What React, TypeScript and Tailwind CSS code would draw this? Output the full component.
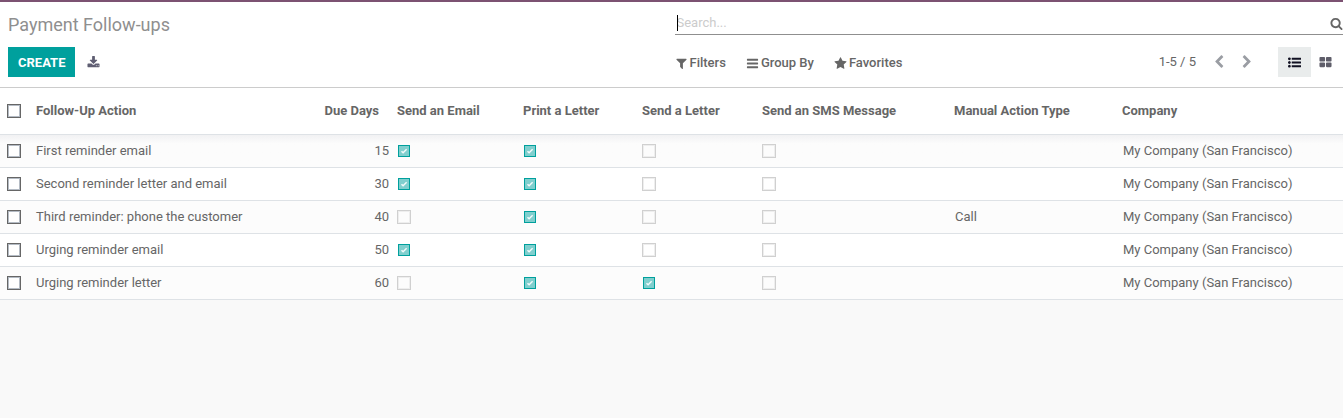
import { useState } from "react";
import type { ReactNode } from "react";
import clsx from "clsx";

interface FollowUp {
  id: number;
  name: string;
  dueDays: number;
  email: boolean;
  print: boolean;
  letter: boolean;
  sms: boolean;
  manualType: string;
  company: string;
}

const company = "My Company (San Francisco)";

const followUps: FollowUp[] = [
  { id: 1, name: "First reminder email", dueDays: 15, email: true, print: true, letter: false, sms: false, manualType: "", company },
  { id: 2, name: "Second reminder letter and email", dueDays: 30, email: true, print: true, letter: false, sms: false, manualType: "", company },
  { id: 3, name: "Third reminder: phone the customer", dueDays: 40, email: false, print: true, letter: false, sms: false, manualType: "Call", company },
  { id: 4, name: "Urging reminder email", dueDays: 50, email: true, print: true, letter: false, sms: false, manualType: "", company },
  { id: 5, name: "Urging reminder letter", dueDays: 60, email: false, print: true, letter: true, sms: false, manualType: "", company },
];

const flagColumns = [
  { key: "email", label: "Send an Email" },
  { key: "print", label: "Print a Letter" },
  { key: "letter", label: "Send a Letter" },
  { key: "sms", label: "Send an SMS Message" },
] as const;

const icons = {
  download:
    "M1344 1344q0-26-19-45t-45-19-45 19-19 45 19 45 45 19 45-19 19-45zm256 0q0-26-19-45t-45-19-45 19-19 45 19 45 45 19 45-19 19-45zm128-224v320q0 40-28 68t-68 28h-1472q-40 0-68-28t-28-68v-320q0-40 28-68t68-28h465l135 136q58 56 136 56t136-56l136-136h464q40 0 68 28t28 68zm-325-569q17 41-14 70l-448 448q-18 19-45 19t-45-19l-448-448q-31-29-14-70 17-39 59-39h256v-448q0-26 19-45t45-19h256q26 0 45 19t19 45v448h256q42 0 59 39z",
  filter:
    "M1595 295q17 41-14 70l-493 493v742q0 42-39 59-13 5-25 5-27 0-45-19l-256-256q-19-19-19-45v-486l-493-493q-31-29-14-70 17-39 59-39h1280q42 0 59 39z",
  bars:
    "M1664 1344v128q0 26-19 45t-45 19h-1408q-26 0-45-19t-19-45v-128q0-26 19-45t45-19h1408q26 0 45 19t19 45zm0-512v128q0 26-19 45t-45 19h-1408q-26 0-45-19t-19-45v-128q0-26 19-45t45-19h1408q26 0 45 19t19 45zm0-512v128q0 26-19 45t-45 19h-1408q-26 0-45-19t-19-45v-128q0-26 19-45t45-19h1408q26 0 45 19t19 45z",
  star:
    "M1728 647q0 22-26 48l-363 354 86 500q1 7 1 20 0 21-10.5 35.5t-30.5 14.5q-19 0-40-12l-449-236-449 236q-22 12-40 12-21 0-31.5-14.5t-10.5-35.5q0-6 2-20l86-500-364-354q-25-27-25-48 0-37 56-46l502-73 225-455q19-41 49-41t49 41l225 455 502 73q56 9 56 46z",
  search:
    "M1216 832q0-185-131.5-316.5t-316.5-131.5-316.5 131.5-131.5 316.5 131.5 316.5 316.5 131.5 316.5-131.5 131.5-316.5zm512 832q0 52-38 90t-90 38q-54 0-90-38l-343-342q-179 124-399 124-143 0-273.5-55.5t-225-150-150-225-55.5-273.5 55.5-273.5 150-225 225-150 273.5-55.5 273.5 55.5 225 150 150 225 55.5 273.5q0 220-124 399l343 343q37 37 37 90z",
  chevronLeft:
    "M1427 301l-531 531 531 531q19 19 19 45t-19 45l-166 166q-19 19-45 19t-45-19l-742-742q-19-19-19-45t19-45l742-742q19-19 45-19t45 19l166 166q19 19 19 45t-19 45z",
  chevronRight:
    "M1363 877l-742 742q-19 19-45 19t-45-19l-166-166q-19-19-19-45t19-45l531-531-531-531q-19-19-19-45t19-45l166-166q19-19 45-19t45 19l742 742q19 19 19 45t-19 45z",
  list:
    "M384 1408q0 80-56 136t-136 56-136-56-56-136 56-136 136-56 136 56 56 136zm0-512q0 80-56 136t-136 56-136-56-56-136 56-136 136-56 136 56 56 136zm1408 416v192q0 13-9.500 22.500t-22.500 9.500h-1216q-13 0-22.500-9.500t-9.500-22.500v-192q0-13 9.500-22.500t22.500-9.500h1216q13 0 22.500 9.500t9.500 22.500zm-1408-928q0 80-56 136t-136 56-136-56-56-136 56-136 136-56 136 56 56 136zm1408 416v192q0 13-9.500 22.500t-22.500 9.500h-1216q-13 0-22.500-9.500t-9.500-22.500v-192q0-13 9.500-22.500t22.500-9.500h1216q13 0 22.500 9.500t9.500 22.500zm0-512v192q0 13-9.500 22.500t-22.500 9.500h-1216q-13 0-22.500-9.500t-9.500-22.500v-192q0-13 9.500-22.500t22.500-9.500h1216q13 0 22.500 9.500t9.500 22.500z",
  kanban:
    "M832 1024v384q0 52-38 90t-90 38h-512q-52 0-90-38t-38-90v-384q0-52 38-90t90-38h512q52 0 90 38t38 90zm0-768v384q0 52-38 90t-90 38h-512q-52 0-90-38t-38-90v-384q0-52 38-90t90-38h512q52 0 90 38t38 90zm896 768v384q0 52-38 90t-90 38h-512q-52 0-90-38t-38-90v-384q0-52 38-90t90-38h512q52 0 90 38t38 90zm0-768v384q0 52-38 90t-90 38h-512q-52 0-90-38t-38-90v-384q0-52 38-90t90-38h512q52 0 90 38t38 90z",
};

function Icon({ name, className = "size-[13px]" }: { name: keyof typeof icons; className?: string }) {
  return (
    <svg viewBox="0 0 1792 1792" fill="currentColor" aria-hidden="true" className={clsx("shrink-0", className)}>
      <path d={icons[name]} />
    </svg>
  );
}

function RowCheckbox({ label }: { label: string }) {
  return (
    <input
      type="checkbox"
      aria-label={label}
      className="block size-3.5 appearance-none border border-[#666666] bg-white shadow-[inset_0_0_0_1px_#b4bbc4] checked:bg-[#00a09d]"
    />
  );
}

function FlagCheckbox({ checked, label }: { checked: boolean; label: string }) {
  return (
    <span className="relative flex size-3.5 items-center justify-center">
      <input
        type="checkbox"
        aria-label={label}
        checked={checked}
        disabled
        className={clsx(
          "block appearance-none border",
          checked ? "size-3 border-[#00a09d] bg-[#80cfce]" : "size-3.5 border-[#d0d0d0] shadow-[inset_0_0_0_1px_#eeeeee]"
        )}
      />
      {checked && (
        <svg viewBox="0 0 12 12" fill="none" aria-hidden="true" className="pointer-events-none absolute size-3">
          <path d="M3.500 6.200l1.600 1.600 3.500-3.500" stroke="#f2fafa" strokeWidth="1.500" />
        </svg>
      )}
    </span>
  );
}

function HeaderCell({ children, className }: { children: ReactNode; className?: string }) {
  return <th className={clsx("truncate px-1 text-left font-bold", className)}>{children}</th>;
}

function ControlPanel() {
  const [query, setQuery] = useState("");

  return (
    <header className="grid grid-cols-2 border-b border-[#cccccc] bg-white">
      <h1 className="flex h-11 items-center pt-0.5 pl-2 text-lg text-[#8f8f8f]">Payment Follow-ups</h1>

      {/* Search */}
      <div className="pl-[3px]">
        <label className="relative flex h-[33px] items-center border-b border-[#8f8f8f] pt-2.5">
          {query === "" && <span className="absolute left-0.5 h-4 w-px bg-black" />}
          <input
            type="text"
            aria-label="Search"
            placeholder="Search..."
            value={query}
            onChange={(e) => setQuery(e.target.value)}
            className="min-w-0 grow pl-0.5 outline-none placeholder:text-[#cccccc]"
          />
          <Icon name="search" />
        </label>
      </div>

      {/* Actions */}
      <div className="flex h-[41px] items-start gap-3 pt-px pl-2">
        <button type="button" className="h-[30px] bg-[#00a09d] px-2.5 pt-0.5 font-bold text-white uppercase">
          Create
        </button>
        <button type="button" aria-label="Export all" className="flex h-[30px] items-center text-[#5f5e72]">
          <Icon name="download" />
        </button>
      </div>

      {/* Filters, pager and view switcher */}
      <div className="flex h-[41px] items-start justify-between pt-px pl-[3px]">
        <div className="flex h-8 items-center gap-5 font-medium">
          <button type="button" className="flex items-center gap-0.5">
            <Icon name="filter" />
            Filters
          </button>
          <button type="button" className="flex items-center gap-0.5">
            <Icon name="bars" />
            Group By
          </button>
          <button type="button" className="flex items-center gap-0.5">
            <Icon name="star" />
            Favorites
          </button>
        </div>
        <div className="flex h-[30px] items-center">
          <span>1-5 / 5</span>
          <div className="flex gap-3.5 px-4 text-[#9a9da3]">
            <button type="button" aria-label="Previous">
              <Icon name="chevronLeft" className="size-3.5" />
            </button>
            <button type="button" aria-label="Next">
              <Icon name="chevronRight" className="size-3.5" />
            </button>
          </div>
          <div className="flex pl-2">
            <button type="button" aria-label="List view" className="flex h-[30px] w-[33px] items-center justify-center bg-[#e9ecec] text-[#111122]">
              <Icon name="list" />
            </button>
            <button type="button" aria-label="Kanban view" className="flex h-[30px] w-8 items-center pl-2 text-[#5f5e6a]">
              <Icon name="kanban" />
            </button>
          </div>
        </div>
      </div>
    </header>
  );
}

export default function App() {
  return (
    <div className="min-h-screen border-t-2 border-[#7c5272] bg-[#f9f9f9] font-[Roboto,sans-serif] text-[13px] leading-5 text-[#666666]">
      <ControlPanel />

      <table className="w-full table-fixed border-collapse">
        <colgroup>
          <col className="w-8" />
          <col />
          <col className="w-[80px]" />
          <col className="w-[126px]" />
          <col className="w-[119px]" />
          <col className="w-[120px]" />
          <col className="w-[192px]" />
          <col className="w-[168px]" />
          <col className="w-[225px]" />
        </colgroup>
        <thead>
          <tr className="h-[46px] border-b border-[#dee2e6] bg-white">
            <th className="pl-[7px]">
              <RowCheckbox label="Select all" />
            </th>
            <HeaderCell>Follow-Up Action</HeaderCell>
            <HeaderCell className="pr-3.5 text-right">Due Days</HeaderCell>
            {flagColumns.map((column) => (
              <HeaderCell key={column.key}>{column.label}</HeaderCell>
            ))}
            <HeaderCell>Manual Action Type</HeaderCell>
            <HeaderCell>Company</HeaderCell>
          </tr>
        </thead>
        <tbody>
          {followUps.map((row) => (
            <tr
              key={row.id}
              className="h-[33px] border-b border-[#dee2e6] bg-white odd:bg-[#fcfcfc] first:bg-linear-to-b first:from-[#f0f0f2] first:to-[#fcfcfc] first:to-30% first:bg-no-repeat"
            >
              <td className="pl-[7px]">
                <RowCheckbox label={`Select ${row.name}`} />
              </td>
              <td className="truncate px-1">{row.name}</td>
              <td className="px-1 text-right">{row.dueDays}</td>
              {flagColumns.map((column) => (
                <td key={column.key} className="px-1">
                  <FlagCheckbox checked={row[column.key]} label={column.label} />
                </td>
              ))}
              <td className="truncate px-[5px]">{row.manualType}</td>
              <td className="truncate px-[5px]">{row.company}</td>
            </tr>
          ))}
        </tbody>
      </table>
    </div>
  );
}
